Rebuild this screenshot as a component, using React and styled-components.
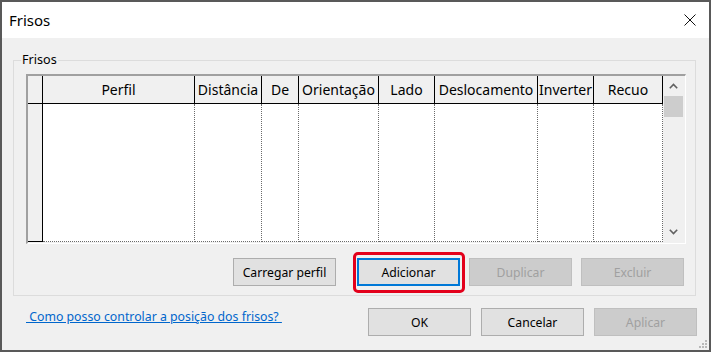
import React from "react";
import styled, { createGlobalStyle } from "styled-components";

const GlobalStyle = createGlobalStyle`
  html, body { margin: 0; padding: 0; background: #ffffff; }
  body { font-family: "Segoe UI", "Noto Sans", "Open Sans", sans-serif; }
  * { box-sizing: border-box; }
`;

const Window = styled.div`
  position: relative;
  width: 711px;
  height: 352px;
  border: 2px solid #595959;
  background: #f0f0f0;
  display: flex;
  flex-direction: column;
  color: #000;
  font-family: "Segoe UI", "Noto Sans", "Open Sans", sans-serif;
`;

const TitleBar = styled.div`
  height: 36px;
  flex: none;
  background: #ffffff;
  display: flex;
  align-items: center;
  justify-content: space-between;
  padding: 0 13px 0 7px;
  font-size: 15px;
`;

const Title = styled.span`
  line-height: 20px;
`;

const CloseButton = styled.span`
  display: flex;
  width: 12px;
  height: 12px;
`;

const Group = styled.fieldset`
  margin: 14px 13px 0 11px;
  padding: 6px 9px 9px 12px;
  border: 1px solid #dcdcdc;
  min-width: 0;
`;

const Legend = styled.legend`
  font-size: 12.6px;
  line-height: 16px;
  padding: 0 1px;
  margin-left: -5px;
`;

const GridFrame = styled.div`
  width: 660px;
  height: 170px;
  border-top: 2px solid #a0a0a0;
  border-left: 2px solid #a0a0a0;
  border-right: 1px solid #ffffff;
  border-bottom: 1px solid #ffffff;
  padding: 0 1px 1px 0;
  background: #f0f0f0;
  display: flex;
`;

const Table = styled.div`
  display: grid;
  grid-template-columns: ${(p) => p.$cols.map((c) => c + "px").join(" ")};
  grid-template-rows: 28px 138px;
`;

const HeaderCell = styled.div`
  background: #f0f0f0;
  border-right: 1px solid #000;
  border-bottom: 1px solid #000;
  display: flex;
  align-items: center;
  justify-content: center;
  font-size: 14px;
  white-space: nowrap;
  overflow: hidden;
`;

const BodyCell = styled.div`
  background: ${(p) => (p.$rowHeader ? "#f0f0f0" : "#ffffff")};
  border-right: 1px ${(p) => (p.$rowHeader ? "solid #000" : "dotted #6a6a6a")};
  border-bottom: 1px ${(p) => (p.$rowHeader ? "solid #000" : "dotted #6a6a6a")};
`;

const ScrollBar = styled.div`
  width: 21px;
  display: flex;
  flex-direction: column;
  background: #f0f0f0;
`;

const ScrollArrow = styled.div`
  height: 20px;
  display: flex;
  align-items: center;
  justify-content: center;
`;

const Thumb = styled.div`
  height: 21px;
  margin: 0 1px;
  background: #cdcdcd;
`;

const ScrollTrack = styled.div`
  flex: 1;
`;

const ButtonRow = styled.div`
  display: flex;
  justify-content: flex-end;
  align-items: center;
  gap: ${(p) => p.$gap}px;
  margin-top: ${(p) => p.$top}px;
  padding-right: ${(p) => p.$right}px;
`;

const Button = styled.button`
  position: relative;
  width: 103px;
  height: 28px;
  margin-left: ${(p) => p.$shift || 0}px;
  padding: 0;
  font-family: inherit;
  font-size: 12.2px;
  color: ${(p) => (p.disabled ? "#a0a0a0" : "#000")};
  background: ${(p) => (p.disabled ? "#cccccc" : "#e1e1e1")};
  border: ${(p) =>
    p.$focused ? "2px solid #0078d7" : p.disabled ? "1px solid #bfbfbf" : "1px solid #adadad"};
  ${(p) =>
    p.$highlight &&
    `
    &::after {
      content: "";
      position: absolute;
      top: -8px;
      bottom: -9px;
      left: -6px;
      right: -7px;
      border: 3px solid #e3001b;
      border-radius: 5px;
      pointer-events: none;
    }
  `}
`;

const Footer = styled.div`
  display: flex;
  align-items: flex-start;
  justify-content: space-between;
  margin-top: 12px;
  padding: 0 12px 0 24px;
`;

const HelpLink = styled.a`
  font-size: 12.3px;
  line-height: 18px;
  color: #0066cc;
  text-decoration: underline;
  white-space: pre;
  cursor: pointer;
`;

const FooterButtons = styled.div`
  display: flex;
  gap: 10px;
`;

const SizeGrip = styled.svg`
  position: absolute;
  right: 1px;
  bottom: 1px;
`;

const Chevron = ({ up }) => (
  <svg width="9" height="6" viewBox="0 0 9 6">
    <path
      d={up ? "M0.8 5.2 L4.5 1.5 L8.2 5.2" : "M0.8 0.8 L4.5 4.5 L8.2 0.8"}
      fill="none"
      stroke="#606060"
      strokeWidth="1.6"
    />
  </svg>
);

const columns = [
  { w: 15, label: "" },
  { w: 152, label: "Perfil" },
  { w: 67, label: "Distância" },
  { w: 37, label: "De" },
  { w: 80, label: "Orientação" },
  { w: 56, label: "Lado" },
  { w: 103, label: "Deslocamento" },
  { w: 56, label: "Inverter" },
  { w: 69, label: "Recuo" },
];

export default function App() {
  return (
    <>
      <GlobalStyle />
      <Window>
        <TitleBar>
          <Title>Frisos</Title>
          <CloseButton>
            <svg width="12" height="12" viewBox="0 0 12 12">
              <path d="M0.5 0.5 L11.5 11.5 M11.5 0.5 L0.5 11.5" stroke="#111" strokeWidth="1" fill="none" />
            </svg>
          </CloseButton>
        </TitleBar>

        <Group>
          <Legend>Frisos</Legend>
          <GridFrame>
            <Table $cols={columns.map((c) => c.w)}>
              {columns.map((c, i) => (
                <HeaderCell key={"h" + i}>{c.label}</HeaderCell>
              ))}
              {columns.map((c, i) => (
                <BodyCell key={"b" + i} $rowHeader={i === 0} />
              ))}
            </Table>
            <ScrollBar>
              <ScrollArrow>
                <Chevron up />
              </ScrollArrow>
              <Thumb />
              <ScrollTrack />
              <ScrollArrow>
                <Chevron />
              </ScrollArrow>
            </ScrollBar>
          </GridFrame>
          <ButtonRow $gap={9} $top={14} $right={2}>
            <Button>Carregar perfil</Button>
            <Button $focused $highlight $shift={12}>
              Adicionar
            </Button>
            <Button disabled>Duplicar</Button>
            <Button disabled>Excluir</Button>
          </ButtonRow>
        </Group>

        <Footer>
          <HelpLink>{" Como posso controlar a posição dos frisos? "}</HelpLink>
          <FooterButtons>
            <Button>OK</Button>
            <Button>Cancelar</Button>
            <Button disabled>Aplicar</Button>
          </FooterButtons>
        </Footer>

        <SizeGrip width="9" height="9" viewBox="0 0 9 9">
          <g fill="#b8b8b8">
            <rect x="6" y="0" width="2" height="2" />
            <rect x="3" y="3" width="2" height="2" />
            <rect x="6" y="3" width="2" height="2" />
            <rect x="0" y="6" width="2" height="2" />
            <rect x="3" y="6" width="2" height="2" />
            <rect x="6" y="6" width="2" height="2" />
          </g>
        </SizeGrip>
      </Window>
    </>
  );
}
